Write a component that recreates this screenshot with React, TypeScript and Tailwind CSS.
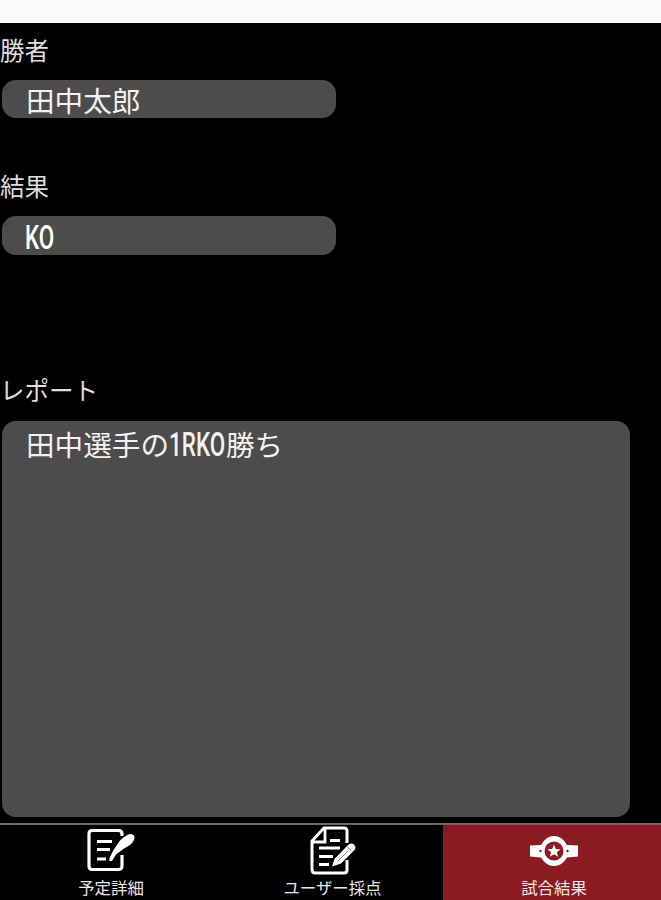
import type { ReactNode } from "react";

function Label({ children }: { children: ReactNode }) {
  return (
    <div className="h-9 text-[24.500px] leading-[35px] text-[#dedede] whitespace-nowrap">
      {children}
    </div>
  );
}

// Condensed latin letters used inside the values
function Condensed({ children }: { children: ReactNode }) {
  return (
    <span className="inline-block origin-left scale-x-[0.68] font-['Roboto'] text-[33px] leading-9 font-medium whitespace-nowrap">
      {children}
    </span>
  );
}

function NoteIcon() {
  return (
    <svg width="50" height="46" viewBox="0 0 50 46" fill="none" stroke="white">
      <path
        d="M36 8V6Q36 2.500 32.500 2.500H6Q3 2.500 3 6V38Q3 41.500 6 41.500H32.500Q36 41.500 36 38V27"
        strokeWidth="3.200"
      />
      <path d="M11 13.500H26M11 21.500H24M11 31H20" strokeWidth="2.800" />
      <path
        d="M23.500 33V30L27.500 22L34 12.500Q40 6.500 45 6Q50 7 48 12Q45 17.500 38 20.500L30 26.500L26 33Z"
        fill="white"
        stroke="none"
      />
    </svg>
  );
}

function ReportIcon() {
  return (
    <svg width="46" height="50" viewBox="0 0 46 50" fill="none" stroke="white">
      <path
        d="M37 17V5Q37 2 34 2H14L2 15V43Q2 47 5 47H34Q37 47 37 44V34"
        strokeWidth="3"
      />
      <path d="M15 3V16H3" strokeWidth="2.800" />
      <path d="M20 14.500H30M9 22H30M9 30.500H23M9 38.500H19" strokeWidth="2.800" />
      <path
        d="M22 40.500L24.500 33L38 19Q41 16.500 44 18.500Q46.500 21 44.500 24L31 37.500Z"
        fill="white"
        stroke="none"
      />
      <path d="M28 35L38 25M37.500 21L42 25.500" stroke="#777" strokeWidth="0.900" />
    </svg>
  );
}

function BeltIcon() {
  return (
    <svg width="48" height="32" viewBox="0 0 48 32">
      <path
        d="M0 10.500L11 10Q16 1 24 1Q32 1 37 10L48 10.500V21.500L37 22.500Q32 31 24 31Q16 31 11 22.500L0 21.500Z"
        fill="white"
      />
      <circle cx="24" cy="16" r="9.500" fill="#8b1b20" />
      <path
        d="M24 9.500L25.800 14L30.500 14.300L26.900 17.300L28.100 21.800L24 19.300L19.900 21.800L21.100 17.300L17.500 14.300L22.200 14Z"
        fill="white"
      />
      <circle cx="10.500" cy="16" r="1.200" fill="#8b1b20" />
      <circle cx="37.500" cy="16" r="1.200" fill="#8b1b20" />
    </svg>
  );
}

function Tab({ icon, label, active }: { icon: ReactNode; label: string; active?: boolean }) {
  return (
    <div className={`flex flex-col items-center ${active ? "bg-[#8b1b20]" : "bg-black"}`}>
      <div className="h-[50px] pt-0.5 flex items-center justify-center">{icon}</div>
      <div className="h-6 text-[16.400px] leading-6 text-[#e8e8e8] whitespace-nowrap">{label}</div>
    </div>
  );
}

export default function App() {
  return (
    <div className="w-[661px] h-[900px] overflow-hidden flex flex-col bg-black text-[#f2f2f2] font-['Noto_Sans_CJK_JP',sans-serif]">
      <header className="h-[23px] shrink-0 bg-[#f9fafc]" />

      <main className="h-[800px] shrink-0 pt-[9px] pl-[2px]">
        <div className="-ml-[2px]">
          <Label>勝者</Label>
        </div>
        <div className="mt-3 w-[334px] h-[38px] rounded-[14px] bg-[#4c4c4c] pl-6 text-[28.600px] leading-[39px]">
          田中太郎
        </div>

        <div className="mt-[50px] -ml-[2px]">
          <Label>結果</Label>
        </div>
        <div className="mt-3 w-[334px] h-[39px] rounded-[14px] bg-[#4c4c4c] pl-[23px] pt-1 flex items-center text-white">
          <Condensed>KO</Condensed>
        </div>

        <div className="mt-[117px] -ml-[2px]">
          <Label>レポート</Label>
        </div>
        <div className="mt-[13px] w-[628px] h-[396px] rounded-[14px] bg-[#4c4c4c] pl-6 pt-1 flex items-start text-[28.600px] leading-[38px]">
          <span>田中選手の</span>
          <span className="w-[57px] h-[38px] pt-0.5 flex items-center">
            <Condensed>1RKO</Condensed>
          </span>
          <span>勝ち</span>
        </div>
      </main>

      <nav className="h-[77px] shrink-0 border-t-2 border-[#686868] grid grid-cols-[222px_221px_222px]">
        <Tab icon={<NoteIcon />} label="予定詳細" />
        <Tab icon={<ReportIcon />} label="ユーザー採点" />
        <Tab icon={<BeltIcon />} label="試合結果" active />
      </nav>
    </div>
  );
}
